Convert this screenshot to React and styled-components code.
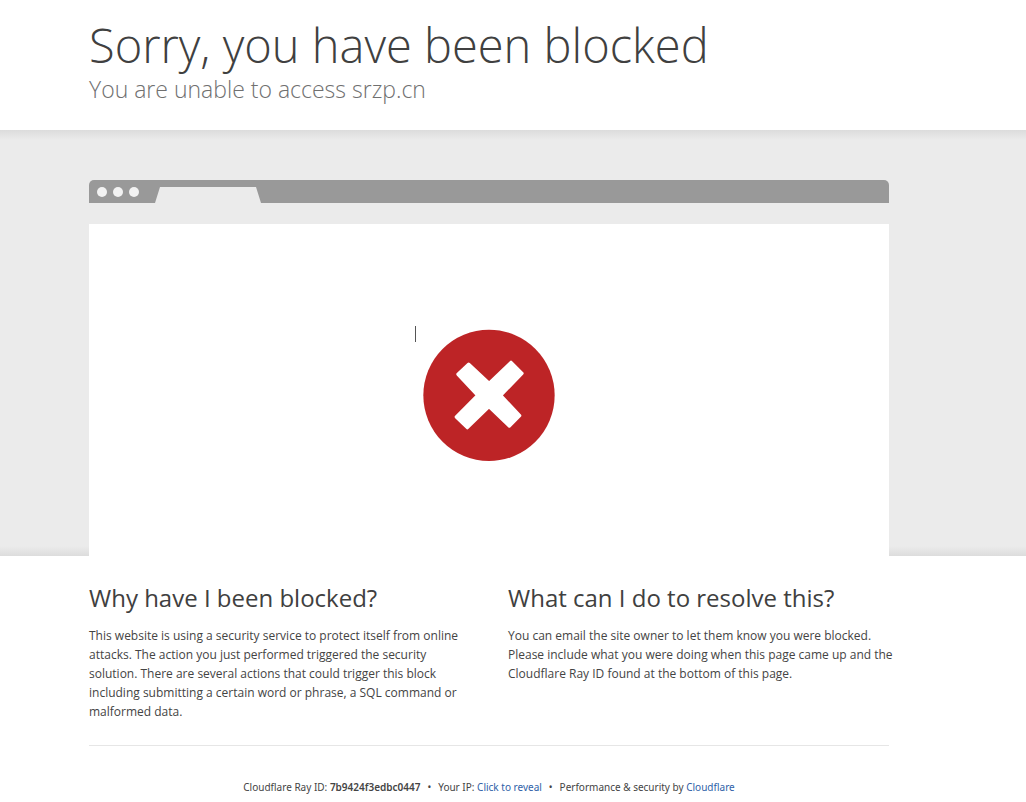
import React from "react";
import styled, { createGlobalStyle } from "styled-components";

const GlobalStyle = createGlobalStyle`
  *, *::before, *::after { box-sizing: border-box; }
  body {
    margin: 0;
    background: #fff;
    color: #444;
    font-family: "Open Sans", "Noto Sans", sans-serif;
    font-size: 12px;
    line-height: 19px;
  }
`;

const Wrapper = styled.div`
  padding: 0 137px 0 89px;
`;

const Header = styled.header`
  padding: 15px 0 26px;
`;

const Title = styled.h1`
  margin: 0;
  color: #404040;
  font-size: 47px;
  font-weight: 300;
  line-height: 60px;
`;

const Subtitle = styled.h2`
  margin: 0;
  color: #707070;
  font-size: 23px;
  font-weight: 300;
  line-height: 29px;
`;

const Band = styled.section`
  padding-top: 50px;
  background:
    linear-gradient(to bottom, #dcdcdc, #ebebeb00) top / 100% 10px no-repeat,
    linear-gradient(to top, #dcdcdc, #ebebeb00) bottom / 100% 10px no-repeat,
    #ebebeb;
`;

const BrowserBar = styled.div`
  display: flex;
  align-items: flex-end;
  height: 23px;
  padding-left: 8px;
  border-radius: 5px 5px 0 0;
  background: #999;
`;

const Dots = styled.div`
  display: flex;
  gap: 6px;
  margin-right: 16px;
  padding-bottom: 6px;
`;

const Dot = styled.span`
  width: 10px;
  height: 10px;
  border-radius: 50%;
  background: #f2f2f2;
`;

const Tab = styled.span`
  width: 106px;
  height: 16px;
  background: #ebebeb;
  clip-path: polygon(5px 0, 101px 0, 100% 100%, 0 100%);
`;

const Screen = styled.div`
  display: flex;
  justify-content: center;
  margin-top: 21px;
  padding: 105px 0 95px;
  background: #fff;
`;

const IconFrame = styled.div`
  position: relative;
  height: 132px;
`;

const Caret = styled.span`
  position: absolute;
  top: -3px;
  left: -8px;
  width: 1px;
  height: 16px;
  background: #555;
`;

const Columns = styled.div`
  display: grid;
  grid-template-columns: 1fr 1fr;
  gap: 38px;
  padding: 26px 0 24px;
  border-bottom: 1px solid #e6e6e6;
`;

const ColumnTitle = styled.h2`
  margin: 0 0 12px;
  color: #404040;
  font-size: 24px;
  font-weight: 400;
  line-height: 32px;
`;

const Text = styled.p`
  margin: 0 -6px 0 0;
`;

const Footer = styled.footer`
  display: flex;
  justify-content: center;
  gap: 7px;
  padding: 32px 0 5px;
  font-family: "Noto Sans", "Open Sans", sans-serif;
  font-size: 10px;
`;

const Strong = styled.strong`
  font-weight: 600;
`;

const Link = styled.a`
  color: #2f5fa8;
  text-decoration: none;
`;

const LinkButton = styled.button`
  padding: 0;
  border: 0;
  background: none;
  color: #2f5fa8;
  font: inherit;
  cursor: pointer;
`;

function BlockedIcon() {
  return (
    <svg width="132" height="132" viewBox="68 57 396 396" role="img" aria-label="Blocked">
      <circle cx="266" cy="256" r="197" fill="#bd2426" />
      <path
        d="M205 163 173 193 232 256 168 321 201 353 266 290 327 348 358 317 301 256 365 190 332 157 266 220Z"
        fill="#fff"
        stroke="#fff"
        strokeWidth="10"
        strokeLinejoin="round"
      />
    </svg>
  );
}

export default function App() {
  return (
    <>
      <GlobalStyle />
      <Wrapper>
        <Header>
          <Title>Sorry, you have been blocked</Title>
          <Subtitle>You are unable to access srzp.cn</Subtitle>
        </Header>
      </Wrapper>
      <Band>
        <Wrapper>
          <BrowserBar>
            <Dots>
              <Dot />
              <Dot />
              <Dot />
            </Dots>
            <Tab />
          </BrowserBar>
          <Screen>
            <IconFrame>
              <Caret />
              <BlockedIcon />
            </IconFrame>
          </Screen>
        </Wrapper>
      </Band>
      <Wrapper>
        <Columns>
          <section>
            <ColumnTitle>Why have I been blocked?</ColumnTitle>
            <Text>
              This website is using a security service to protect itself from online attacks. The
              action you just performed triggered the security solution. There are several actions
              that could trigger this block including submitting a certain word or phrase, a SQL
              command or malformed data.
            </Text>
          </section>
          <section>
            <ColumnTitle>What can I do to resolve this?</ColumnTitle>
            <Text>
              You can email the site owner to let them know you were blocked. Please include what
              you were doing when this page came up and the Cloudflare Ray ID found at the bottom
              of this page.
            </Text>
          </section>
        </Columns>
        <Footer>
          <span>
            Cloudflare Ray ID: <Strong>7b9424f3edbc0447</Strong>
          </span>
          <span>•</span>
          <span>
            Your IP: <LinkButton type="button">Click to reveal</LinkButton>
          </span>
          <span>•</span>
          <span>
            Performance &amp; security by <Link href="#cloudflare">Cloudflare</Link>
          </span>
        </Footer>
      </Wrapper>
    </>
  );
}
